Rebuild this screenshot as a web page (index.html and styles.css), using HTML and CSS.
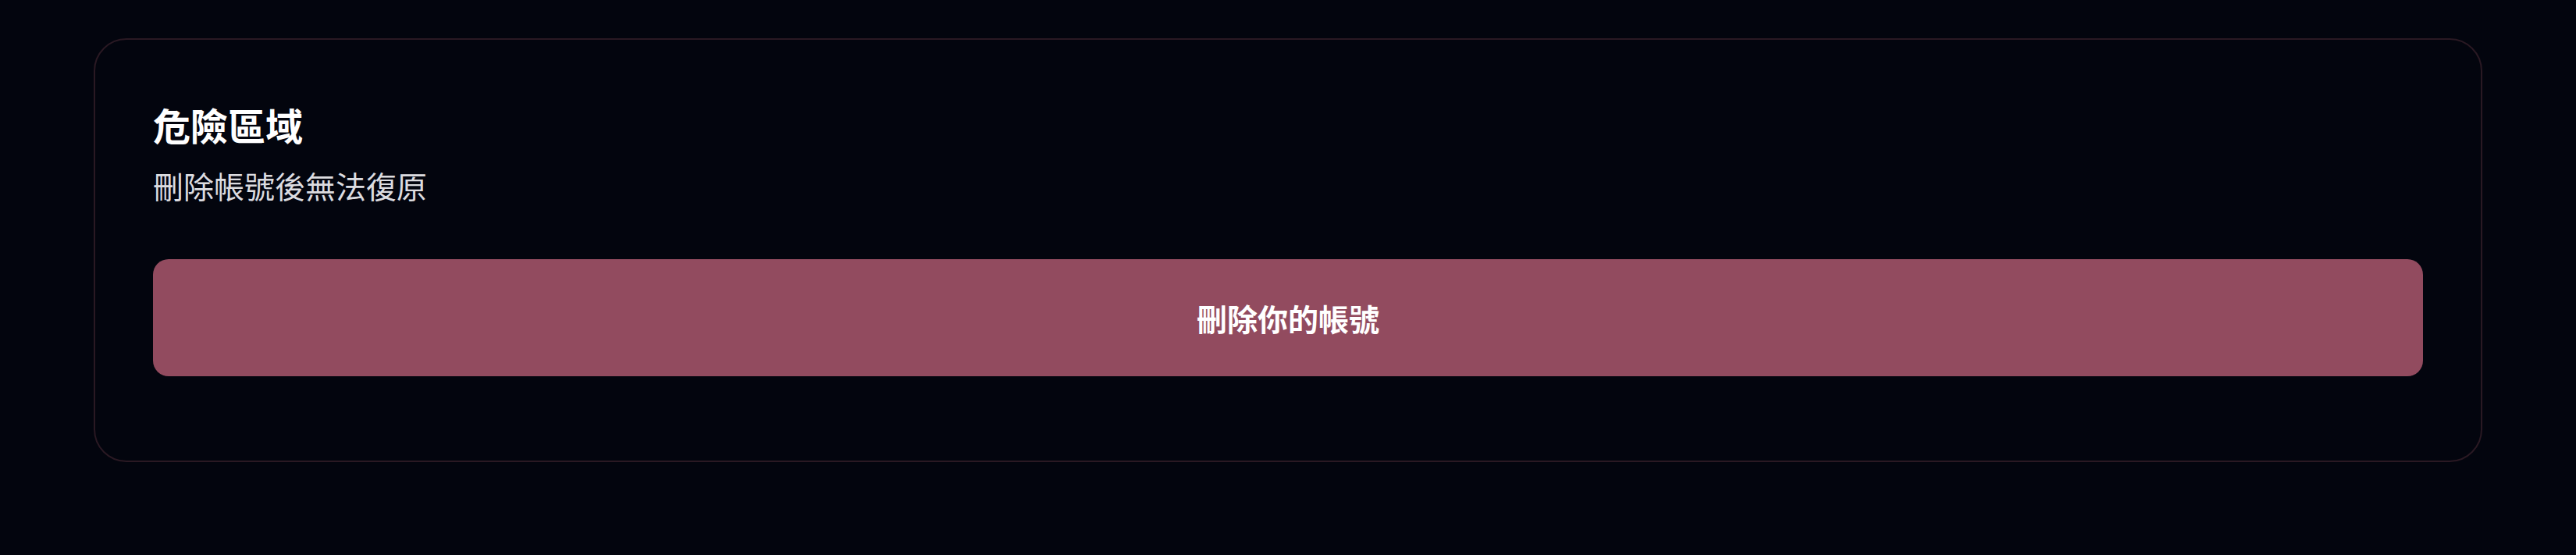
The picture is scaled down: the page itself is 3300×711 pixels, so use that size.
FILE: index.html
```html
<!DOCTYPE html>
<html lang="zh-Hant">
<head>
<meta charset="utf-8">
<title>危險區域</title>
<link rel="stylesheet" href="styles.css">
</head>
<body>
<main class="page">
  <section class="danger-card">
    <h2 class="danger-title">危險區域</h2>
    <p class="danger-desc">刪除帳號後無法復原</p>
    <button class="danger-btn" type="button">刪除你的帳號</button>
  </section>
</main>
</body>
</html>
```

FILE: styles.css
```css
* { box-sizing: border-box; }
html, body {
  margin: 0;
  padding: 0;
  background: #03050e;
}
body {
  font-family: "Noto Sans CJK TC", "Noto Sans", sans-serif;
  color: #ffffff;
}
.page {
  padding: 49px 120px;
}
.danger-card {
  border: 2px solid #2a1923;
  border-radius: 42px;
  padding: 78px 74px 108px;
  display: flex;
  flex-direction: column;
}
.danger-title {
  margin: 0;
  font-size: 48px;
  font-weight: 700;
  line-height: 60px;
  color: #ffffff;
}
.danger-desc {
  margin: 20px 0 0;
  font-size: 39px;
  font-weight: 400;
  line-height: 56px;
  color: #dcdce0;
}
.danger-btn {
  margin-top: 67px;
  height: 150px;
  width: 100%;
  border: none;
  border-radius: 20px;
  background: #924b5f;
  color: #ffffff;
  font-family: "Noto Sans CJK TC", "Noto Sans", sans-serif;
  font-size: 39px;
  font-weight: 700;
  cursor: pointer;
}
```
